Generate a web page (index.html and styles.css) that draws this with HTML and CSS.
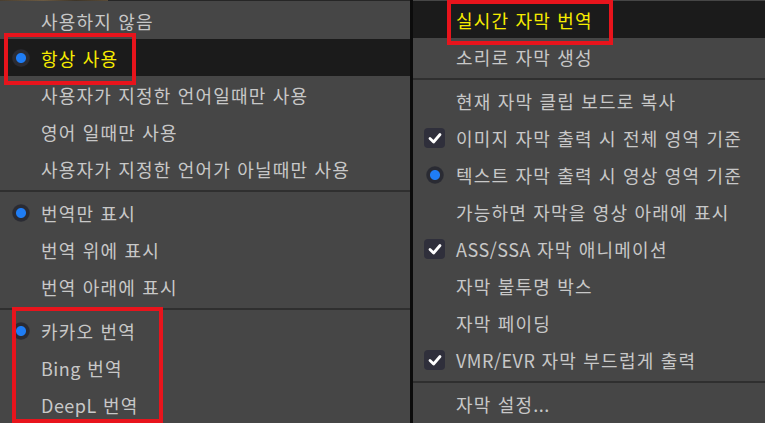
FILE: index.html
```html
<!DOCTYPE html>
<html lang="ko">
<head>
<meta charset="utf-8">
<link rel="stylesheet" href="styles.css">
</head>
<body>
<div class="screen">
  <div class="col left">
    <div class="topstrip"><div class="thumb"></div></div>
    <div class="menu menu-left">
      <div class="item"><span class="ind"></span><span class="label">사용하지 않음</span></div>
      <div class="item hl"><span class="ind"><span class="radio"></span></span><span class="label">항상 사용</span></div>
      <div class="item"><span class="ind"></span><span class="label">사용자가 지정한 언어일때만 사용</span></div>
      <div class="item"><span class="ind"></span><span class="label">영어 일때만 사용</span></div>
      <div class="item"><span class="ind"></span><span class="label">사용자가 지정한 언어가 아닐때만 사용</span></div>
      <div class="sep"></div>
      <div class="item"><span class="ind"><span class="radio"></span></span><span class="label">번역만 표시</span></div>
      <div class="item"><span class="ind"></span><span class="label">번역 위에 표시</span></div>
      <div class="item"><span class="ind"></span><span class="label">번역 아래에 표시</span></div>
      <div class="sep"></div>
      <div class="item"><span class="ind"><span class="radio"></span></span><span class="label">카카오 번역</span></div>
      <div class="item"><span class="ind"></span><span class="label"><span class="lat">Bing</span> 번역</span></div>
      <div class="item"><span class="ind"></span><span class="label"><span class="lat">DeepL</span> 번역</span></div>
    </div>
  </div>
  <div class="divider"></div>
  <div class="col right">
    <div class="menu menu-right">
      <div class="item hl"><span class="ind"></span><span class="label">실시간 자막 번역</span></div>
      <div class="item"><span class="ind"></span><span class="label">소리로 자막 생성</span></div>
      <div class="sep"></div>
      <div class="item"><span class="ind"></span><span class="label">현재 자막 클립 보드로 복사</span></div>
      <div class="item"><span class="ind"><span class="check"><svg viewBox="0 0 20 20" width="20" height="20"><path d="M5 10.5 L8.6 14 L15 6.5" fill="none" stroke="#ffffff" stroke-width="2.8" stroke-linecap="round" stroke-linejoin="round"/></svg></span></span><span class="label">이미지 자막 출력 시 전체 영역 기준</span></div>
      <div class="item"><span class="ind"><span class="radio"></span></span><span class="label">텍스트 자막 출력 시 영상 영역 기준</span></div>
      <div class="item"><span class="ind"></span><span class="label">가능하면 자막을 영상 아래에 표시</span></div>
      <div class="item"><span class="ind"><span class="check"><svg viewBox="0 0 20 20" width="20" height="20"><path d="M5 10.5 L8.6 14 L15 6.5" fill="none" stroke="#ffffff" stroke-width="2.8" stroke-linecap="round" stroke-linejoin="round"/></svg></span></span><span class="label"><span class="lat">ASS/SSA</span> 자막 애니메이션</span></div>
      <div class="item"><span class="ind"></span><span class="label">자막 불투명 박스</span></div>
      <div class="item"><span class="ind"></span><span class="label">자막 페이딩</span></div>
      <div class="item"><span class="ind"><span class="check"><svg viewBox="0 0 20 20" width="20" height="20"><path d="M5 10.5 L8.6 14 L15 6.5" fill="none" stroke="#ffffff" stroke-width="2.8" stroke-linecap="round" stroke-linejoin="round"/></svg></span></span><span class="label"><span class="lat">VMR/EVR</span> 자막 부드럽게 출력</span></div>
      <div class="sep"></div>
      <div class="item"><span class="ind"></span><span class="label">자막 설정<span class="lat">...</span></span></div>
    </div>
  </div>
  <div class="mark mark-1"></div>
  <div class="mark mark-2"></div>
  <div class="mark mark-3"></div>
</div>
</body>
</html>
```

FILE: styles.css
```css
html, body {
  margin: 0;
  padding: 0;
  background: #464646;
  overflow: hidden;
}
.screen {
  position: relative;
  display: flex;
  width: 765px;
  height: 423px;
  overflow: hidden;
  font-family: "Noto Sans CJK KR", "Noto Sans", sans-serif;
  font-size: 18px;
  letter-spacing: 1.2px;
  color: #c8c8c8;
}
.lat {
  letter-spacing: 0.5px;
}
.col {
  display: flex;
  flex-direction: column;
  background: #464646;
}
.left {
  width: 410px;
}
.right {
  flex: 1;
}
.divider {
  width: 3px;
  background: #0c0c0c;
}
.topstrip {
  display: flex;
  height: 2px;
  background: #262626;
}
.thumb {
  width: 108px;
  background: linear-gradient(90deg, #4a3f30, #6b5a42 40%, #3e3528 70%, #5a4c38);
}
.menu {
  display: flex;
  flex-direction: column;
}
.menu-left {
  padding-top: 1px;
}
.menu-right {
  padding-top: 1px;
}
.item {
  display: grid;
  grid-template-columns: 41px 1fr;
  align-items: center;
  height: 37px;
  white-space: nowrap;
}
.menu-right .item {
  grid-template-columns: 43px 1fr;
}
.item.hl {
  background: #1b1b1b;
  color: #f7ec00;
}
.label {
  line-height: 37px;
  transform: translateY(1px);
}
.ind {
  display: flex;
  align-items: center;
  justify-content: center;
  height: 37px;
}
.radio {
  width: 18px;
  height: 18px;
  border-radius: 50%;
  background: radial-gradient(circle, #1f7df5 0 4.5px, #2a2b33 5.5px 8px, rgba(42,43,51,0.5) 9px);
}
.check {
  display: flex;
  align-items: center;
  justify-content: center;
  width: 21px;
  height: 20px;
  border-radius: 4px;
  background: #2f2f3b;
}
.sep {
  height: 7px;
  display: flex;
  align-items: center;
}
.sep::before {
  content: "";
  flex: 1;
  height: 2px;
  background: #2f2f2f;
}
.mark {
  position: absolute;
  border: 4px solid #e8141c;
  box-sizing: border-box;
}
.mark-1 {
  left: 4px;
  top: 33px;
  width: 132px;
  height: 52px;
}
.mark-2 {
  left: 447px;
  top: 0;
  width: 166px;
  height: 45px;
}
.mark-3 {
  left: 12px;
  top: 307px;
  width: 151px;
  height: 116px;
}
```
